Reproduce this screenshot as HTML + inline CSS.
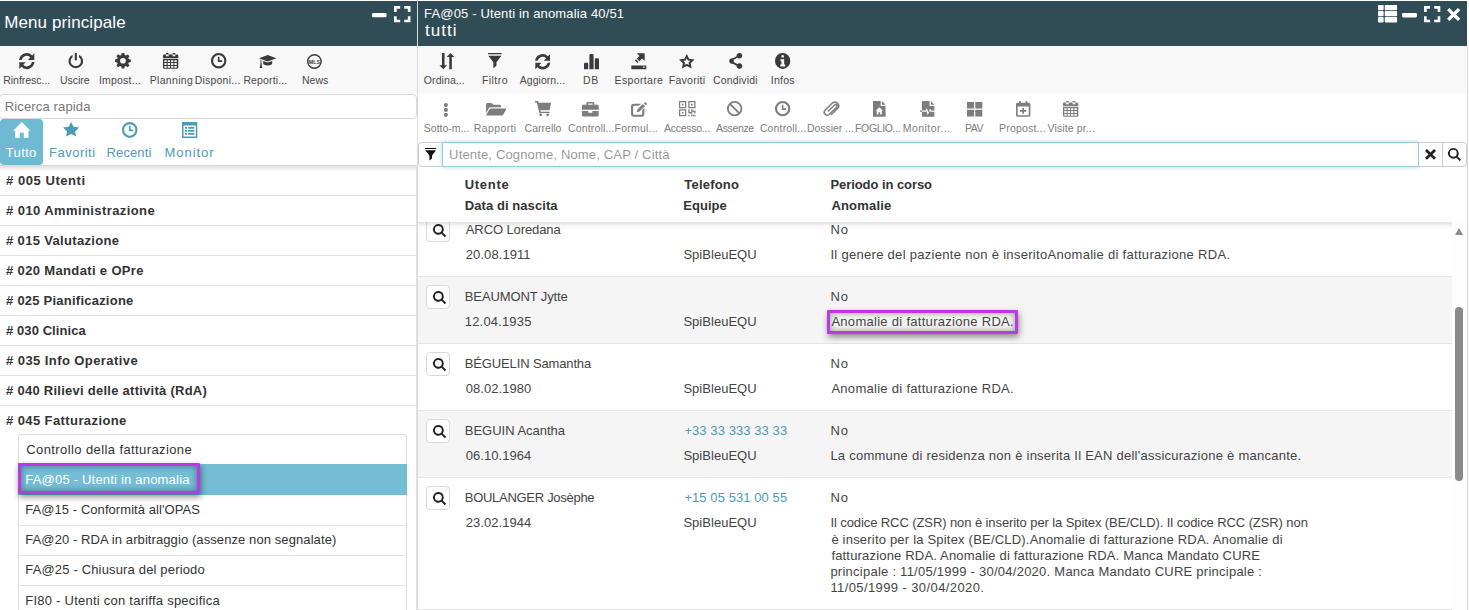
<!DOCTYPE html>
<html lang="it">
<head>
<meta charset="utf-8">
<title>Menu principale</title>
<style>
*{box-sizing:border-box;margin:0;padding:0}
html,body{width:1469px;height:610px;overflow:hidden;background:#fff}
body{font-family:"Liberation Sans",sans-serif;font-size:13px;color:#444;position:relative}
span{white-space:nowrap;display:inline-block}
svg.ic{position:absolute;display:block;overflow:visible}
#left{position:absolute;left:0;top:0;width:417px;height:610px;overflow:hidden;background:#fff}
#right{position:absolute;left:418px;top:0;width:1051px;height:610px;overflow:hidden;background:#fff}
#sep{position:absolute;left:417px;top:0;width:1px;height:610px;background:#dcdcdc}
.hdr{position:absolute;left:0;top:1px;height:45px;background:#304d57;color:#fff}
.hdr div{position:absolute;white-space:nowrap}
.t1{font-size:17px;line-height:20px}
.t2{font-size:13px;line-height:16px;margin-top:-.5px}
.t3{font-size:17px;line-height:20px}
.tb{position:absolute;left:0;height:48px;background:#f8f8f8}
.tb2{background:#fff}
.tl{position:absolute;font-size:10.5px;line-height:14px;white-space:nowrap;color:#484848}
.tb2 .tl{color:#7d7d7d}
.qsearch{position:absolute;left:-1px;top:94px;width:418px;height:25px;border:1px solid #d8d8d8;border-radius:4px;color:#777}
.ph{position:absolute;line-height:16px;white-space:nowrap}
.qsearch .ph{margin-left:1px}
.tabs{position:absolute;left:0;top:119px;width:417px;height:47px;border-bottom:1px solid #d8d8d8}
.tab.act{position:absolute;top:0;height:46px;background:#6fbad3;color:#fff;border-radius:4px}
.tab{color:#4d9bb9}
.tbl{position:absolute;line-height:16px;font-size:13px;white-space:nowrap}
.menu{position:absolute;left:0;top:166px;width:416.500px;height:444px;border-right:1px solid #e0e0e0}
.mi{height:30px;line-height:29px;border-bottom:1px solid #e2e2e2;font-weight:bold;color:#333;padding-left:5.900px;white-space:nowrap}
.mi:last-child{border-bottom:0}
.menushadow{position:absolute;left:0;top:166px;width:416px;height:5px;background:linear-gradient(rgba(0,0,0,.13),rgba(0,0,0,0))}
.sub{position:absolute;left:18px;top:434px;width:389px}
.si{border:1px solid #ddd;border-top:0;border-bottom-color:#e2e2e2;padding-left:7.100px;white-space:nowrap;color:#333}
.si:first-child{border-top:1px solid #ddd;border-radius:4px 4px 0 0}
.si.sel{background:#74bdd5;color:#fff;border-color:#74bdd5}
.hl{position:absolute;border:3px solid #bb38e4;border-radius:1px;box-shadow:1px 3px 6px rgba(0,0,0,.45),inset 0 0 6px rgba(0,0,0,.4)}
.frow{position:absolute;left:0;top:142px;width:1049px;height:25px;z-index:5}
.fbtn,.xbtn,.sbtn{position:absolute;top:0;height:25px;border:1px solid #ccc;background:#fff}
.fbtn{left:0;width:25px;border-radius:4px 0 0 4px}
.finput{position:absolute;left:24px;top:0;width:977px;height:25px;border:1px solid #94cbdd;border-radius:2px 0 0 2px;box-shadow:0 0 4px rgba(102,175,233,.55);color:#999;background:#fff}
.xbtn{left:1001px;width:24px;border-left:0}
.sbtn{left:1024px;width:25px;border-radius:0 4px 4px 0}
.xbtn svg.ic{margin:-1px 0 0 0}
.sbtn svg.ic,.fbtn svg.ic{margin:-1px 0 0 -1px}
.thead{position:absolute;left:0;top:167px;width:1049px;height:54.500px;background:#fff;font-weight:bold;color:#333;line-height:21px}
.thead div{position:absolute;top:7px;white-space:nowrap}
.thead .c1{left:47.600px}.thead .c2{left:266.100px}.thead .c3{left:413.200px}
.theadshadow{position:absolute;left:0;top:221.500px;width:1034px;height:8px;background:linear-gradient(rgba(0,0,0,.12),rgba(0,0,0,.03) 50%,rgba(0,0,0,0))}
.rows{position:absolute;left:0;top:0;width:1034px;height:610px}
.row{position:absolute;left:0;width:1034px;border-top:1px solid #e5e5e5;background:#fff}
.row.alt{background:#f5f5f5}
.row:last-child{border-bottom:1px solid #e2e2e2}
.row div{position:absolute;white-space:nowrap;line-height:16px}
.row .rb{left:8px;top:8px;width:24px;height:24px;border:1px solid #d9d9d9;border-radius:4px;background:#fff}
.row .rb svg.ic{margin:-1px 0 0 -1px}
.row .n{left:47.600px;top:12px}.row .d{left:47.600px;top:37px}
.row .t{left:266.200px;top:12px;color:#4d9bb9}.row .e{left:266.200px;top:37px}
.row .p{left:413.200px;top:12px}.row .a{left:413.200px;top:37px}
.sbar{position:absolute;left:1034px;top:221px;width:15px;height:389px;background:#fdfdfd}
.sbar .up{position:absolute;left:3px;top:6.700px;width:0;height:0;border-left:4.500px solid transparent;border-right:4.500px solid transparent;border-bottom:7px solid #8a8a8a}
.sbar .thumb{position:absolute;left:3px;top:85.500px;width:8.400px;height:174px;border-radius:4.200px;background:#8a8a8a}
.rborder{position:absolute;left:1049px;top:46px;width:1px;height:564px;background:#d8d8d8}
.row .a .more{position:static;margin-top:1px}
</style>
</head>
<body>
<div id="left">
<div class="hdr" style="width:417px"><div class="t1" style="left:5.0px;top:12px"><span style="letter-spacing:0.10px;margin-left:-0.8px">Menu principale</span></div><svg class="ic" style="left:372.0px;top:12.0px;width:14.5px;height:4.2px;fill:#fff" viewBox="0 0 15 4" preserveAspectRatio="none"><rect x="0" y="0" width="15" height="4" rx="1.200"/></svg><svg class="ic" style="left:393.5px;top:5.0px;width:16.5px;height:16.3px;fill:#fff" viewBox="0 0 16 16" preserveAspectRatio="none"><path d="M0 0h6v2.600H2.600V6H0zM10 0h6v6h-2.600V2.600H10zM0 10h2.600v3.400H6V16H0zM13.400 10H16v6h-6v-2.600h3.400z"/></svg></div>
<div class="tb" style="top:46px;width:417px">
<div class="tbtn"><svg class="ic" style="left:19.1px;top:6.7px;width:15.6px;height:16.2px;fill:#3a3a3a" viewBox="0 0 16 16" preserveAspectRatio="none"><path d="M0.100 7A7.900 7.900 0 0 1 13.500 2.400L15.700 0.300V6.900H9.100L11.700 4.300A5.400 5.400 0 0 0 2.700 7zM15.900 9A7.900 7.900 0 0 1 2.500 13.600L0.300 15.700V9.100H6.900L4.300 11.700A5.400 5.400 0 0 0 13.300 9z"/></svg><div class="tl" style="left:4.0px;top:27px"><span style="letter-spacing:-0.02px;margin-left:-0.8px">Rinfresc...</span></div></div>
<div class="tbtn"><svg class="ic" style="left:67.5px;top:7.2px;width:15.6px;height:15.0px;fill:#3a3a3a" viewBox="0 0 16 16" preserveAspectRatio="none"><path d="M6.900 0h2.200v7.800H6.900zM4.700 1.900v2.500a5.300 5.300 0 1 0 6.600 0V1.900a7.500 7.500 0 1 1-6.600 0z"/></svg><div class="tl" style="left:60.8px;top:27px"><span style="letter-spacing:-0.02px;margin-left:-0.8px">Uscire</span></div></div>
<div class="tbtn"><svg class="ic" style="left:114.9px;top:7.2px;width:15.9px;height:15.5px;fill:#3a3a3a" viewBox="0 0 16 16" preserveAspectRatio="none"><path fill-rule="evenodd" d="M8 5.100a2.900 2.900 0 1 0 0 5.800 2.900 2.900 0 0 0 0-5.800zM6.700 0h2.600l.4 2.100 1.300.6 1.800-1.200 1.800 1.800-1.200 1.800.5 1.300 2.100.4v2.600l-2.100.4-.5 1.300 1.200 1.800-1.800 1.800-1.800-1.200-1.300.5-.4 2.100H6.700l-.4-2.100-1.300-.5-1.800 1.200-1.800-1.800 1.200-1.800-.5-1.300L0 9.300V6.700l2.100-.4.500-1.300-1.200-1.800 1.800-1.800 1.800 1.200 1.300-.6z"/></svg><div class="tl" style="left:99.8px;top:27px"><span style="letter-spacing:0.19px;margin-left:-0.8px">Impost...</span></div></div>
<div class="tbtn"><svg class="ic" style="left:162.5px;top:7.1px;width:15.3px;height:15.8px;fill:#3a3a3a" viewBox="0 0 15 16" preserveAspectRatio="none"><path fill-rule="evenodd" d="M0 2.700a1.200 1.200 0 0 1 1.200-1.200H13.800a1.200 1.200 0 0 1 1.200 1.200V5.300H0zM2.900.7a.7.7 0 0 1 .7-.7h1.300a.7.7 0 0 1 .7.7v2.500H2.900zM9.400.7a.7.7 0 0 1 .7-.7h1.300a.7.7 0 0 1 .7.7v2.500H9.400zM0 6.200h15V14.800a1.200 1.200 0 0 1-1.200 1.200H1.200A1.200 1.200 0 0 1 0 14.800zM1.3 7.3v1.9h2.3v-1.9zM4.6 7.3v1.9h2.3v-1.9zM7.9 7.3v1.9h2.3v-1.9zM11.2 7.3v1.9h2.3v-1.9zM1.3 10.2v1.9h2.3v-1.9zM4.6 10.2v1.9h2.3v-1.9zM7.9 10.2v1.9h2.3v-1.9zM11.2 10.2v1.9h2.3v-1.9zM1.3 13.1v1.9h2.3v-1.9zM4.6 13.1v1.9h2.3v-1.9zM7.9 13.1v1.9h2.3v-1.9zM11.2 13.1v1.9h2.3v-1.9z"/></svg><div class="tl" style="left:150.6px;top:27px"><span style="letter-spacing:0.30px;margin-left:-0.8px">Planning</span></div></div>
<div class="tbtn"><svg class="ic" style="left:211.3px;top:7.3px;width:15.4px;height:15.4px;fill:#3a3a3a" viewBox="0 0 16 16" preserveAspectRatio="none"><path fill-rule="evenodd" d="M8 0a8 8 0 1 0 0 16A8 8 0 0 0 8 0zm0 2.200a5.800 5.800 0 1 1 0 11.600A5.800 5.800 0 0 1 8 2.200zM7.100 3.900h1.700v3.700h2.800v1.700H7.100z"/></svg><div class="tl" style="left:195.5px;top:27px"><span style="letter-spacing:0.21px;margin-left:-0.8px">Disponi...</span></div></div>
<div class="tbtn"><svg class="ic" style="left:258.7px;top:8.8px;width:17.4px;height:13.0px;fill:#3a3a3a" viewBox="0 0 18 13" preserveAspectRatio="none"><path d="M9 0L18 3.200 9 6.400 0 3.200zM4.300 5.900L9 7.600l4.700-1.700v2.300c0 1.300-2.100 2.200-4.700 2.200S4.300 9.500 4.300 8.200zM1.500 4.500l1 .4v3.300c.5.300.6.800.2 1.200l.6 3.600H.7l.8-3.600c-.4-.4-.3-.9.100-1.200z"/></svg><div class="tl" style="left:244.2px;top:27px"><span style="letter-spacing:0.13px;margin-left:-0.8px">Reporti...</span></div></div>
<div class="tbtn"><svg class="ic" style="left:307.4px;top:8.0px;width:14.8px;height:15.0px;fill:#3a3a3a" viewBox="0 0 16 16" preserveAspectRatio="none"><path fill-rule="evenodd" d="M8 0a8 8 0 1 0 0 16A8 8 0 0 0 8 0zm0 1.500a6.500 6.500 0 1 1 0 13A6.500 6.500 0 0 1 8 1.500z"/><text x="8" y="10.300" font-size="5.800" font-weight="bold" text-anchor="middle" font-family="Liberation Sans, sans-serif" letter-spacing="0">MLS</text></svg><div class="tl" style="left:302.7px;top:27px"><span style="letter-spacing:0.07px;margin-left:-0.8px">News</span></div></div>
</div>
<div class="qsearch"><div class="ph" style="left:4.5px;top:4px"><span style="letter-spacing:0.15px;margin-left:-0.8px">Ricerca rapida</span></div></div>
<div class="tabs"><div class="tab act" style="left:0;width:43px"><svg class="ic" style="left:12.6px;top:2.8px;width:17.6px;height:15.8px;fill:#fff" viewBox="0 0 18 16" preserveAspectRatio="none"><path d="M9 0L17.800 8.800H15.800V16H11V11H7v5H2.200V8.800H.2z"/></svg><div class="tbl" style="left:5.5px;top:26px"><span style="letter-spacing:0.38px;margin-left:0.2px">Tutto</span></div></div><div class="tab"><svg class="ic" style="left:63.4px;top:3.0px;width:16.2px;height:14.5px;fill:#4d9bb9" viewBox="0 0 16 15" preserveAspectRatio="none"><path d="M8 0l2.400 5 5.600.8-4 3.900 1 5.300-5-2.600L3 15l1-5.300L0 5.800 5.600 5z"/></svg><div class="tbl" style="left:49.8px;top:26px"><span style="letter-spacing:0.50px;margin-left:-0.8px">Favoriti</span></div></div><div class="tab"><svg class="ic" style="left:121.7px;top:2.9px;width:15.5px;height:15.9px;fill:#4d9bb9" viewBox="0 0 16 16" preserveAspectRatio="none"><path fill-rule="evenodd" d="M8 0a8 8 0 1 0 0 16A8 8 0 0 0 8 0zm0 2.200a5.800 5.800 0 1 1 0 11.600A5.800 5.800 0 0 1 8 2.200zM7.100 3.900h1.700v3.700h2.800v1.700H7.100z"/></svg><div class="tbl" style="left:107.4px;top:26px"><span style="letter-spacing:0.10px;margin-left:-0.8px">Recenti</span></div></div><div class="tab"><svg class="ic" style="left:181.9px;top:3.0px;width:15.3px;height:16.0px;fill:#4d9bb9" viewBox="0 0 15 16" preserveAspectRatio="none"><path fill-rule="evenodd" d="M0 0h15v16H0zM1.500 3.500v11h12v-11zM2.900 5h2v1.700h-2zM6 5h6.100v1.700H6zM2.900 8h2v1.700h-2zM6 8h6.100v1.700H6zM2.900 11h2v1.700h-2zM6 11h6.100v1.700H6z"/></svg><div class="tbl" style="left:165.4px;top:26px"><span style="letter-spacing:0.93px;margin-left:-0.8px">Monitor</span></div></div></div>
<div class="menu">
<div class="mi"><span style="letter-spacing:0.54px;margin-left:0.2px"># 005 Utenti</span></div>
<div class="mi"><span style="letter-spacing:0.41px;margin-left:0.2px"># 010 Amministrazione</span></div>
<div class="mi"><span style="letter-spacing:0.33px;margin-left:0.2px"># 015 Valutazione</span></div>
<div class="mi"><span style="letter-spacing:0.35px;margin-left:0.2px"># 020 Mandati e OPre</span></div>
<div class="mi"><span style="letter-spacing:0.23px;margin-left:0.2px"># 025 Pianificazione</span></div>
<div class="mi"><span style="letter-spacing:0.07px;margin-left:0.2px"># 030 Clinica</span></div>
<div class="mi"><span style="letter-spacing:0.42px;margin-left:0.2px"># 035 Info Operative</span></div>
<div class="mi"><span style="letter-spacing:0.26px;margin-left:0.2px"># 040 Rilievi delle attività (RdA)</span></div>
<div class="mi"><span style="letter-spacing:0.40px;margin-left:0.2px"># 045 Fatturazione</span></div>
</div>
<div class="sub">
<div class="si" style="height:30px;line-height:29px;border-bottom-width:0px"><span style="letter-spacing:0.40px;margin-left:0.2px">Controllo della fatturazione</span></div>
<div class="si sel" style="height:31px;line-height:31px;border-bottom-width:0px"><span style="letter-spacing:0.20px;margin-left:-0.8px">FA@05 - Utenti in anomalia</span></div>
<div class="si" style="height:31px;line-height:29px;border-bottom-width:1px"><span style="letter-spacing:0.06px;margin-left:-0.8px">FA@15 - Conformità all'OPAS</span></div>
<div class="si" style="height:30px;line-height:27px;border-bottom-width:1px"><span style="letter-spacing:0.09px;margin-left:-0.8px">FA@20 - RDA in arbitraggio (assenze non segnalate)</span></div>
<div class="si" style="height:30px;line-height:27px;border-bottom-width:1px"><span style="letter-spacing:0.16px;margin-left:-0.8px">FA@25 - Chiusura del periodo</span></div>
<div class="si" style="height:30px;line-height:29px;border-bottom-width:1px"><span style="letter-spacing:0.24px;margin-left:-0.8px">FI80 - Utenti con tariffa specifica</span></div>
</div>
<div class="menushadow"></div>
<div class="hl" style="left:18px;top:463px;width:182px;height:31px"></div>
</div>
<div id="sep"></div>
<div id="right">
<div class="hdr" style="width:1049px"><div class="t2" style="left:6.9px;top:5px"><span style="letter-spacing:0.15px;margin-left:-0.8px">FA@05 - Utenti in anomalia 40/51</span></div><div class="t3" style="left:6.9px;top:20px"><span style="letter-spacing:1.00px;margin-left:0.2px">tutti</span></div><svg class="ic" style="left:960.4px;top:3.9px;width:19.1px;height:17.4px;fill:#fff" viewBox="0 0 19 17" preserveAspectRatio="none"><path d="M0 .8C0 .4.400 0 .8 0h4c.4 0 .8.400.8.800v3.600c0 .4-.4.800-.8.800h-4C.4 5.200 0 4.800 0 4.400zM6.700.8c0-.4.400-.8.800-.8h10.700c.4 0 .8.400.8.800v3.600c0 .4-.4.800-.8.800H7.500c-.4 0-.8-.4-.8-.8zM0 6.700c0-.4.400-.8.800-.8h4c.4 0 .8.400.8.800v3.600c0 .4-.4.800-.8.800h-4c-.4 0-.8-.4-.8-.8zM6.700 6.700c0-.4.400-.8.800-.8h10.700c.4 0 .8.400.8.800v3.600c0 .4-.4.800-.8.800H7.500c-.4 0-.8-.4-.8-.8zM0 12.600c0-.4.400-.8.800-.8h4c.4 0 .8.400.8.800v3.600c0 .4-.4.800-.8.800h-4c-.4 0-.8-.4-.8-.8zM6.700 12.600c0-.4.400-.8.800-.8h10.700c.4 0 .8.400.8.800v3.600c0 .4-.4.800-.8.800H7.500c-.4 0-.8-.4-.8-.8z"/></svg><svg class="ic" style="left:984.0px;top:11.8px;width:15.0px;height:4.4px;fill:#fff" viewBox="0 0 15 4" preserveAspectRatio="none"><rect x="0" y="0" width="15" height="4" rx="1.200"/></svg><svg class="ic" style="left:1005.8px;top:5.0px;width:16.3px;height:16.3px;fill:#fff" viewBox="0 0 16 16" preserveAspectRatio="none"><path d="M0 0h6v2.600H2.600V6H0zM10 0h6v6h-2.600V2.600H10zM0 10h2.600v3.400H6V16H0zM13.400 10H16v6h-6v-2.600h3.400z"/></svg><svg class="ic" style="left:1028.7px;top:6.8px;width:13.3px;height:13.1px;fill:#fff" viewBox="0 0 14 14" preserveAspectRatio="none"><path d="M2.500 0L7 4.500 11.500 0 14 2.500 9.500 7 14 11.500 11.500 14 7 9.500 2.500 14 0 11.500 4.500 7 0 2.500z"/></svg></div>
<div class="tb" style="top:46px;width:1049px">
<div class="tbtn"><svg class="ic" style="left:20.8px;top:6.8px;width:15.8px;height:16.2px;fill:#3a3a3a" viewBox="0 0 16 16" preserveAspectRatio="none"><path d="M3 0h2.600v12h2.600L4.300 16 .4 12H3zM11.700 0l3.900 4h-2.600V16h-2.600V4H7.800z"/></svg><div class="tl" style="left:5.6px;top:27px"><span style="letter-spacing:0.09px;margin-left:0.2px">Ordina...</span></div></div>
<div class="tbtn"><svg class="ic" style="left:70.1px;top:6.8px;width:13.6px;height:15.3px;fill:#3a3a3a" viewBox="0 0 14 15" preserveAspectRatio="none"><path d="M0 0h14v1.200H0zM.3 2.800H13.700L8.700 9v3.600L5.500 15V9z"/></svg><div class="tl" style="left:64.7px;top:27px"><span style="letter-spacing:0.46px;margin-left:-0.8px">Filtro</span></div></div>
<div class="tbtn"><svg class="ic" style="left:117.4px;top:7.5px;width:15.3px;height:15.5px;fill:#3a3a3a" viewBox="0 0 16 16" preserveAspectRatio="none"><path d="M0.100 7A7.900 7.900 0 0 1 13.500 2.400L15.700 0.300V6.900H9.100L11.700 4.300A5.400 5.400 0 0 0 2.700 7zM15.900 9A7.900 7.900 0 0 1 2.500 13.600L0.300 15.700V9.100H6.900L4.300 11.700A5.400 5.400 0 0 0 13.300 9z"/></svg><div class="tl" style="left:101.6px;top:27px"><span style="letter-spacing:0.04px;margin-left:0.2px">Aggiorn...</span></div></div>
<div class="tbtn"><svg class="ic" style="left:165.9px;top:7.7px;width:15.0px;height:15.3px;fill:#3a3a3a" viewBox="0 0 15 15" preserveAspectRatio="none"><path d="M0 9.700a1.200 1.200 0 0 1 1.200-1.200h1.800a1.200 1.200 0 0 1 1.200 1.200V15H0zM5.400 1.200A1.200 1.200 0 0 1 6.600 0h1.800a1.200 1.200 0 0 1 1.200 1.200V15H5.400zM10.800 5.400a1.200 1.200 0 0 1 1.200-1.200h1.800A1.200 1.200 0 0 1 15 5.400V15h-4.200z"/></svg><div class="tl" style="left:165.9px;top:27px"><span style="letter-spacing:0.60px;margin-left:-0.8px">DB</span></div></div>
<div class="tbtn"><svg class="ic" style="left:212.7px;top:6.8px;width:15.3px;height:16.2px;fill:#3a3a3a" viewBox="0 0 15 16" preserveAspectRatio="none"><path fill-rule="evenodd" d="M.3 12.300H15V16H.3zM11.800 13.300v1.400h1.600v-1.400zM5.600.2h7.800V8L10.900 5.500 8.300 8.100 5.700 5.500 8.300 2.900zM4.900 6.300l2.600 2.600-1.100 1.100-2.600-2.600z"/></svg><div class="tl" style="left:197.4px;top:27px"><span style="letter-spacing:0.35px;margin-left:-0.8px">Esportare</span></div></div>
<div class="tbtn"><svg class="ic" style="left:260.5px;top:7.7px;width:15.6px;height:14.4px;fill:#3a3a3a" viewBox="0 0 16 15" preserveAspectRatio="none"><path fill-rule="evenodd" d="M8 0l2.400 5 5.600.8-4 3.900 1 5.300-5-2.600L3 15l1-5.300L0 5.800 5.600 5zM8 4.500L6.900 6.800l-2.500.3 1.800 1.800-.4 2.500L8 10.200l2.200 1.200-.4-2.500 1.800-1.800-2.500-.3z"/></svg><div class="tl" style="left:251.5px;top:27px"><span style="letter-spacing:0.27px;margin-left:-0.8px">Favoriti</span></div></div>
<div class="tbtn"><svg class="ic" style="left:309.8px;top:7.1px;width:14.3px;height:15.9px;fill:#3a3a3a" viewBox="0 0 14 16" preserveAspectRatio="none"><path d="M11.200 0a2.800 2.800 0 1 1-2 4.800L5.500 6.900a2.800 2.800 0 0 1 0 2.200l3.700 2.100a2.800 2.800 0 1 1-.8 1.600L4.700 10.700a2.800 2.800 0 1 1 0-5.400l3.700-2.100A2.800 2.800 0 0 1 11.200 0z"/></svg><div class="tl" style="left:294.9px;top:27px"><span style="letter-spacing:0.15px;margin-left:0.2px">Condividi</span></div></div>
<div class="tbtn"><svg class="ic" style="left:357.3px;top:7.1px;width:15.3px;height:15.9px;fill:#3a3a3a" viewBox="0 0 16 16" preserveAspectRatio="none"><path fill-rule="evenodd" d="M8 0a8 8 0 1 0 0 16A8 8 0 0 0 8 0zM6.700 2.300h2.600v2.300H6.700zM5.700 6.200h3.900v5.500h1.100v1.800H5.500v-1.800h1.200V8H5.700z"/></svg><div class="tl" style="left:353.6px;top:27px"><span style="letter-spacing:0.25px;margin-left:-0.8px">Infos</span></div></div>
</div>
<div class="tb tb2" style="top:94px;width:1049px">
<div class="tbtn"><svg class="ic" style="left:25.2px;top:8.7px;width:5.8px;height:13.9px;fill:#7d7d7d" viewBox="0 0 6 14" preserveAspectRatio="none"><circle cx="3" cy="2.100" r="2.100"/><circle cx="3" cy="7" r="2.100"/><circle cx="3" cy="11.900" r="2.100"/></svg><div class="tl" style="left:5.6px;top:27px"><span style="letter-spacing:0.01px;margin-left:0.2px">Sotto-m...</span></div></div>
<div class="tbtn"><svg class="ic" style="left:68.4px;top:9.0px;width:20.4px;height:13.6px;fill:#7d7d7d" viewBox="0 0 20 14" preserveAspectRatio="none"><path d="M0 1.600C0 .7.700 0 1.600 0h3.800l1.700 1.700h6.100c.9 0 1.600.7 1.600 1.500v1.100H5c-1 0-1.800.5-2.300 1.400L0 10.500zM5.300 5.600H19c.7 0 1 .5.700 1.100l-2.900 5.400c-.3.600-1 .9-1.600.9H1c-.7 0-.9-.5-.6-1l2.900-5.400c.4-.6 1-1 1.700-1z"/></svg><div class="tl" style="left:56.5px;top:27px"><span style="letter-spacing:0.40px;margin-left:-0.8px">Rapporti</span></div></div>
<div class="tbtn"><svg class="ic" style="left:116.6px;top:7.3px;width:16.1px;height:15.3px;fill:#7d7d7d" viewBox="0 0 16 15" preserveAspectRatio="none"><path d="M0 0h3.200l.6 1.700H16l-1.400 6.700c-.1.400-.4.700-.9.700H5.400l.3 1.400h8.800v1.300H4.300L1.800 1.400H0zM5.600 12.200a1.400 1.400 0 1 1 0 2.800 1.400 1.400 0 0 1 0-2.800zM12.600 12.200a1.400 1.400 0 1 1 0 2.800 1.400 1.400 0 0 1 0-2.800z"/></svg><div class="tl" style="left:106.4px;top:27px"><span style="letter-spacing:0.01px;margin-left:0.2px">Carrello</span></div></div>
<div class="tbtn"><svg class="ic" style="left:164.2px;top:7.5px;width:16.7px;height:14.5px;fill:#7d7d7d" viewBox="0 0 16 14" preserveAspectRatio="none"><path fill-rule="evenodd" d="M5.300 0h5.400c.6 0 1.100.5 1.100 1.100v1.600h3.100c.6 0 1.100.5 1.100 1.100v3.700H0V3.800c0-.6.500-1.100 1.100-1.100h3.100V1.100C4.200.5 4.700 0 5.300 0zm.5 1.400v1.300h4.400V1.400zM0 8.800h6v1.500h4V8.800h6v4.100c0 .6-.5 1.100-1.100 1.100H1.100C.5 14 0 13.500 0 12.900z"/></svg><div class="tl" style="left:149.8px;top:27px"><span style="letter-spacing:0.16px;margin-left:0.2px">Controll...</span></div></div>
<div class="tbtn"><svg class="ic" style="left:212.7px;top:7.8px;width:16.2px;height:14.8px;fill:#7d7d7d" viewBox="0 0 16 15" preserveAspectRatio="none"><path d="M2.600 1.800h7.200L7.700 3.900H3.100c-.6 0-1 .4-1 1v7c0 .6.400 1 1 1h7c.6 0 1-.4 1-1V8.300l2.100-2.100v6.200c0 1.400-1.200 2.600-2.600 2.600H2.600C1.200 15 0 13.800 0 12.400V4.400C0 3 1.200 1.800 2.600 1.800zM13.900 0L16 2.100l-1.200 1.200-2.100-2.100zM11.800 2.100l2.100 2.100-5.500 5.500-2.800.7.700-2.800z"/></svg><div class="tl" style="left:197.4px;top:27px"><span style="letter-spacing:0.21px;margin-left:-0.8px">Formul...</span></div></div>
<div class="tbtn"><svg class="ic" style="left:260.5px;top:7.3px;width:16.5px;height:15.3px;fill:#7d7d7d" viewBox="0 0 16 15" preserveAspectRatio="none"><path fill-rule="evenodd" d="M0 0h7v7H0zm1.200 1.200v4.600h4.600V1.200zM2.700 2.700h1.600v1.600H2.700zM0 8h7v7H0zm1.200 1.200v4.600h4.600V9.200zM2.700 10.700h1.600v1.600H2.700zM9 0h7v7H9zm1.200 1.200v4.600h4.600V1.200zM11.700 2.700h1.600v1.600h-1.600zM9 8h1.300v2.800h1.500V8H13v1.300h3v3h-1.300v-1.700H13v1.700h-2.700V11.900H9zM9 13.700h1.300V15H9zM11.800 13.300h1.300V15h-1.300zM13.600 13.700H16V15h-2.400z"/></svg><div class="tl" style="left:245.8px;top:27px"><span style="letter-spacing:-0.26px;margin-left:0.2px">Accesso...</span></div></div>
<div class="tbtn"><svg class="ic" style="left:309.3px;top:7.3px;width:15.3px;height:15.3px;stroke:#7d7d7d;fill:none" viewBox="0 0 16 16" preserveAspectRatio="none"><circle cx="8" cy="8" r="7.100" stroke-width="1.800"/><path stroke-width="1.900" d="M3 3L13 13"/></svg><div class="tl" style="left:297.8px;top:27px"><span style="letter-spacing:-0.35px;margin-left:0.2px">Assenze</span></div></div>
<div class="tbtn"><svg class="ic" style="left:357.3px;top:7.3px;width:15.3px;height:15.3px;fill:#7d7d7d" viewBox="0 0 16 16" preserveAspectRatio="none"><path fill-rule="evenodd" d="M8 0a8 8 0 1 0 0 16A8 8 0 0 0 8 0zm0 2.200a5.800 5.800 0 1 1 0 11.600A5.800 5.800 0 0 1 8 2.200zM7.100 3.900h1.700v3.700h2.800v1.700H7.100z"/></svg><div class="tl" style="left:341.7px;top:27px"><span style="letter-spacing:0.16px;margin-left:0.2px">Controll...</span></div></div>
<div class="tbtn"><svg class="ic" style="left:404.6px;top:6.8px;width:17.0px;height:15.8px;stroke:#7d7d7d;fill:none" viewBox="0 0 17 16" preserveAspectRatio="none"><path stroke-width="1.500" stroke-linecap="round" d="M5.300 10.200l6.300-6.200a1.500 1.500 0 0 1 2.200 2.100l-7.800 7.600a3 3 0 0 1-4.200-4.200l7.600-7.400a3.800 3.800 0 0 1 5.400 5.300l-6.400 6.300"/></svg><div class="tl" style="left:389.7px;top:27px"><span style="letter-spacing:-0.04px;margin-left:-0.8px">Dossier ...</span></div></div>
<div class="tbtn"><svg class="ic" style="left:454.5px;top:6.8px;width:12.6px;height:15.8px;fill:#7d7d7d" viewBox="0 0 13 16" preserveAspectRatio="none"><path fill-rule="evenodd" d="M0 0h8v5h5v11H0zM9.300 0L13 3.700H9.300zM6.500 6.400l3.800 3.500H9.100v3.800H7.400v-2.400H5.600v2.400H3.900V9.900H2.700z"/></svg><div class="tl" style="left:437.8px;top:27px"><span style="letter-spacing:-0.35px;margin-left:-0.8px">FOGLIO...</span></div></div>
<div class="tbtn"><svg class="ic" style="left:501.8px;top:6.8px;width:14.4px;height:15.8px;fill:#7d7d7d" viewBox="0 0 15 16" preserveAspectRatio="none"><path fill-rule="evenodd" d="M2 0h8v5h5v4.600h-3.500l-.9-1.900-1.900 3.900-1.600-4.400-1.100 2.400H2zM11.300 0L15 3.700h-3.700zM0 9.600h2v1.300H0zM2 10.900h4.100l.4-1 1.600 4.400 2.100-4.300.5.900H15V16H2z"/></svg><div class="tl" style="left:485.6px;top:27px"><span style="letter-spacing:0.44px;margin-left:-0.8px">Monitor...</span></div></div>
<div class="tbtn"><svg class="ic" style="left:548.6px;top:8.2px;width:15.3px;height:14.4px;fill:#7d7d7d" viewBox="0 0 15 14" preserveAspectRatio="none"><path d="M0 0h6.900v6.400H0zM8.100 0H15v6.400H8.100zM0 7.600h6.900V14H0zM8.100 7.600H15V14H8.100z"/></svg><div class="tl" style="left:547.7px;top:27px"><span style="letter-spacing:-0.40px;margin-left:-0.8px">PAV</span></div></div>
<div class="tbtn"><svg class="ic" style="left:597.6px;top:6.8px;width:14.4px;height:15.8px;fill:#7d7d7d" viewBox="0 0 14 16" preserveAspectRatio="none"><path fill-rule="evenodd" d="M3 0h1.700v1.700h4.600V0H11v1.700h1.500c.8 0 1.500.7 1.500 1.500v11.300c0 .8-.7 1.500-1.500 1.500h-11C.7 16 0 15.300 0 14.500V3.200c0-.8.700-1.500 1.500-1.500H3zM1.600 5.500v8.900h10.800V5.500zM6.200 7h1.600v2.200H10v1.600H7.800V13H6.200v-2.200H4V9.200h2.200z"/></svg><div class="tl" style="left:581.8px;top:27px"><span style="letter-spacing:0.19px;margin-left:-0.8px">Propost...</span></div></div>
<div class="tbtn"><svg class="ic" style="left:644.7px;top:6.8px;width:15.3px;height:15.8px;fill:#7d7d7d" viewBox="0 0 15 16" preserveAspectRatio="none"><path fill-rule="evenodd" d="M0 2.700a1.200 1.200 0 0 1 1.200-1.200H13.800a1.200 1.200 0 0 1 1.200 1.200V5.300H0zM2.900.7a.7.7 0 0 1 .7-.7h1.300a.7.7 0 0 1 .7.7v2.500H2.900zM9.400.7a.7.7 0 0 1 .7-.7h1.300a.7.7 0 0 1 .7.7v2.500H9.400zM0 6.200h15V14.800a1.200 1.200 0 0 1-1.200 1.200H1.200A1.200 1.200 0 0 1 0 14.800zM1.3 7.3v1.9h2.3v-1.9zM4.6 7.3v1.9h2.3v-1.9zM7.9 7.3v1.9h2.3v-1.9zM11.2 7.3v1.9h2.3v-1.9zM1.3 10.2v1.9h2.3v-1.9zM4.6 10.2v1.9h2.3v-1.9zM7.9 10.2v1.9h2.3v-1.9zM11.2 10.2v1.9h2.3v-1.9zM1.3 13.1v1.9h2.3v-1.9zM4.6 13.1v1.9h2.3v-1.9zM7.9 13.1v1.9h2.3v-1.9zM11.2 13.1v1.9h2.3v-1.9z"/></svg><div class="tl" style="left:629.4px;top:27px"><span style="letter-spacing:0.12px;margin-left:0.2px">Visite pr...</span></div></div>
</div>
<div class="frow"><div class="fbtn"><svg class="ic" style="left:7.2px;top:5.5px;width:11.3px;height:12.5px;fill:#111" viewBox="0 0 14 15" preserveAspectRatio="none"><path d="M0 0h14v1.200H0zM.3 2.800H13.700L8.700 9v3.600L5.500 15V9z"/></svg></div><div class="finput"><div class="ph" style="left:6.9px;top:4px"><span style="letter-spacing:0.16px;margin-left:-0.8px">Utente, Cognome, Nome, CAP / Città</span></div></div><div class="xbtn"><svg class="ic" style="left:5.9px;top:7.1px;width:11.0px;height:10.8px;fill:#222" viewBox="0 0 14 14" preserveAspectRatio="none"><path d="M2.500 0L7 4.500 11.500 0 14 2.500 9.500 7 14 11.500 11.500 14 7 9.500 2.500 14 0 11.500 4.500 7 0 2.500z"/></svg></div><div class="sbtn"><svg class="ic" style="left:6.0px;top:5.8px;width:13.1px;height:13.1px;fill:#222" viewBox="0 0 14 14" preserveAspectRatio="none"><path fill-rule="evenodd" d="M5.700 0a5.700 5.700 0 0 1 4.700 9l3.600 3.500-1.500 1.500-3.600-3.600A5.700 5.700 0 1 1 5.700 0zm0 2a3.700 3.700 0 1 0 0 7.400 3.700 3.700 0 0 0 0-7.400z"/></svg></div></div>
<div class="rows">
<div class="row" style="top:209px;height:67px"><div class="rb"><svg class="ic" style="left:6.5px;top:5.5px;width:13.2px;height:13.2px;fill:#222" viewBox="0 0 14 14" preserveAspectRatio="none"><path fill-rule="evenodd" d="M5.700 0a5.700 5.700 0 0 1 4.700 9l3.600 3.500-1.500 1.500-3.600-3.600A5.700 5.700 0 1 1 5.700 0zm0 2a3.700 3.700 0 1 0 0 7.400 3.700 3.700 0 0 0 0-7.400z"/></svg></div><div class="n"><span style="letter-spacing:-0.10px;margin-left:0.2px">ARCO Loredana</span></div><div class="d"><span style="letter-spacing:0.08px;margin-left:0.2px">20.08.1911</span></div><div class="e"><span style="letter-spacing:0.03px;margin-left:-0.8px">SpiBleuEQU</span></div><div class="p"><span style="letter-spacing:1.00px;margin-left:-0.8px">No</span></div><div class="a"><span style="letter-spacing:0.30px;margin-left:-0.8px">Il genere del paziente non è inseritoAnomalie di fatturazione RDA.</span></div></div>
<div class="row alt" style="top:276px;height:67px"><div class="rb"><svg class="ic" style="left:6.5px;top:5.5px;width:13.2px;height:13.2px;fill:#222" viewBox="0 0 14 14" preserveAspectRatio="none"><path fill-rule="evenodd" d="M5.700 0a5.700 5.700 0 0 1 4.700 9l3.600 3.500-1.500 1.500-3.600-3.600A5.700 5.700 0 1 1 5.700 0zm0 2a3.700 3.700 0 1 0 0 7.400 3.700 3.700 0 0 0 0-7.400z"/></svg></div><div class="n"><span style="letter-spacing:-0.12px;margin-left:-0.8px">BEAUMONT Jytte</span></div><div class="d"><span style="letter-spacing:0.17px;margin-left:-0.8px">12.04.1935</span></div><div class="e"><span style="letter-spacing:0.03px;margin-left:-0.8px">SpiBleuEQU</span></div><div class="p"><span style="letter-spacing:1.00px;margin-left:-0.8px">No</span></div><div class="a"><span style="letter-spacing:0.29px;margin-left:0.2px">Anomalie di fatturazione RDA.</span></div></div>
<div class="row" style="top:343px;height:67px"><div class="rb"><svg class="ic" style="left:6.5px;top:5.5px;width:13.2px;height:13.2px;fill:#222" viewBox="0 0 14 14" preserveAspectRatio="none"><path fill-rule="evenodd" d="M5.700 0a5.700 5.700 0 0 1 4.700 9l3.600 3.500-1.500 1.500-3.600-3.600A5.700 5.700 0 1 1 5.700 0zm0 2a3.700 3.700 0 1 0 0 7.400 3.700 3.700 0 0 0 0-7.400z"/></svg></div><div class="n"><span style="letter-spacing:-0.14px;margin-left:-0.8px">BÉGUELIN Samantha</span></div><div class="d"><span style="letter-spacing:0.04px;margin-left:0.2px">08.02.1980</span></div><div class="e"><span style="letter-spacing:0.03px;margin-left:-0.8px">SpiBleuEQU</span></div><div class="p"><span style="letter-spacing:1.00px;margin-left:-0.8px">No</span></div><div class="a"><span style="letter-spacing:0.29px;margin-left:0.2px">Anomalie di fatturazione RDA.</span></div></div>
<div class="row alt" style="top:410px;height:67px"><div class="rb"><svg class="ic" style="left:6.5px;top:5.5px;width:13.2px;height:13.2px;fill:#222" viewBox="0 0 14 14" preserveAspectRatio="none"><path fill-rule="evenodd" d="M5.700 0a5.700 5.700 0 0 1 4.700 9l3.600 3.500-1.500 1.500-3.600-3.600A5.700 5.700 0 1 1 5.700 0zm0 2a3.700 3.700 0 1 0 0 7.400 3.700 3.700 0 0 0 0-7.400z"/></svg></div><div class="n"><span style="letter-spacing:-0.02px;margin-left:-0.8px">BEGUIN Acantha</span></div><div class="d"><span style="letter-spacing:0.04px;margin-left:0.2px">06.10.1964</span></div><div class="t"><span style="letter-spacing:0.08px;margin-left:0.2px">+33 33 333 33 33</span></div><div class="e"><span style="letter-spacing:0.03px;margin-left:-0.8px">SpiBleuEQU</span></div><div class="p"><span style="letter-spacing:1.00px;margin-left:-0.8px">No</span></div><div class="a"><span style="letter-spacing:0.25px;margin-left:-0.8px">La commune di residenza non è inserita Il EAN dell'assicurazione è mancante.</span></div></div>
<div class="row" style="top:477px;height:133px"><div class="rb"><svg class="ic" style="left:6.5px;top:5.5px;width:13.2px;height:13.2px;fill:#222" viewBox="0 0 14 14" preserveAspectRatio="none"><path fill-rule="evenodd" d="M5.700 0a5.700 5.700 0 0 1 4.700 9l3.600 3.500-1.500 1.500-3.600-3.600A5.700 5.700 0 1 1 5.700 0zm0 2a3.700 3.700 0 1 0 0 7.400 3.700 3.700 0 0 0 0-7.400z"/></svg></div><div class="n"><span style="letter-spacing:-0.29px;margin-left:-0.8px">BOULANGER Josèphe</span></div><div class="d"><span style="letter-spacing:0.04px;margin-left:0.2px">23.02.1944</span></div><div class="t"><span style="letter-spacing:0.08px;margin-left:0.2px">+15 05 531 00 55</span></div><div class="e"><span style="letter-spacing:0.03px;margin-left:-0.8px">SpiBleuEQU</span></div><div class="p"><span style="letter-spacing:1.00px;margin-left:-0.8px">No</span></div><div class="a"><span style="letter-spacing:-0.09px;margin-left:-0.8px">Il codice RCC (ZSR) non è inserito per la Spitex (BE/CLD). Il codice RCC (ZSR) non</span><div class="more"><span style="letter-spacing:0.20px;margin-left:0.2px">è inserito per la Spitex (BE/CLD).Anomalie di fatturazione RDA. Anomalie di</span><br><span style="letter-spacing:0.18px;margin-left:0.2px">fatturazione RDA. Anomalie di fatturazione RDA. Manca Mandato CURE</span><br><span style="letter-spacing:0.25px;margin-left:-0.8px">principale : 11/05/1999 - 30/04/2020. Manca Mandato CURE principale :</span><br><span style="letter-spacing:0.40px;margin-left:-0.8px">11/05/1999 - 30/04/2020.</span></div></div></div>
</div>
<div class="thead"><div class="c1"><span style="letter-spacing:0.68px;margin-left:-0.8px">Utente</span><br><span style="letter-spacing:0.07px;margin-left:-0.8px">Data di nascita</span></div><div class="c2"><span style="letter-spacing:0.20px;margin-left:0.2px">Telefono</span><br><span style="letter-spacing:0.02px;margin-left:-0.8px">Equipe</span></div><div class="c3"><span style="letter-spacing:-0.06px;margin-left:-0.8px">Periodo in corso</span><br><span style="letter-spacing:0.19px;margin-left:0.2px">Anomalie</span></div></div>
<div class="theadshadow"></div>
<div class="sbar"><div class="up"></div><div class="thumb"></div></div>
<div class="rborder"></div>
<div class="hl" style="left:409px;top:310px;width:191px;height:23.500px"></div>
</div>
</body>
</html>
